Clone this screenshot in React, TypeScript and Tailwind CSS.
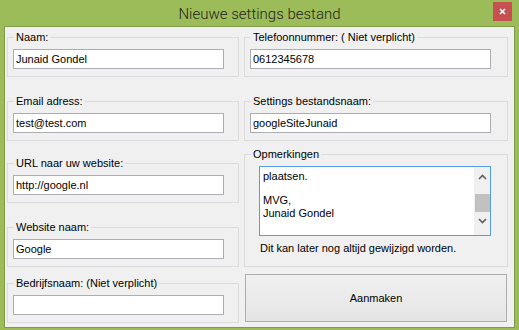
import React from "react";

const font = { fontFamily: '"Liberation Sans", Arial, sans-serif' };

function Group({
  label,
  className,
  children,
}: {
  label: string;
  className: string;
  children?: React.ReactNode;
}) {
  return (
    <div className={`relative border border-[#dcdcdc] ${className}`}>
      <span className="absolute left-[6px] top-[-8px] bg-[#f0f0f0] px-[2px] text-[11px] leading-[14px] text-black">
        {label}
      </span>
      {children}
    </div>
  );
}

function Input({ value, className }: { value: string; className: string }) {
  return (
    <div
      className={`flex h-[20px] items-center border border-[#abadb3] bg-white pl-[2px] text-[11px] text-black ${className}`}
    >
      {value}
    </div>
  );
}

export default function App() {
  return (
    <div className="flex h-[330px] w-[519px] flex-col bg-[#9cbc59]" style={font}>
      <div className="relative flex h-[26px] items-center justify-center">
        <span
          className="pt-[1px] text-[15px] font-light leading-[20px] text-[#1f241b]"
          style={{ fontFamily: 'Roboto, "Noto Sans", sans-serif' }}
        >
          Nieuwe settings bestand
        </span>
        <div className="absolute right-[7px] top-[2px] flex h-[19px] w-[19px] items-center justify-center bg-[#c75050]">
          <svg width="7" height="7" viewBox="0 0 7 7">
            <path d="M1 1 L6 6 M6 1 L1 6" stroke="#ffffff" strokeWidth="1.6" />
          </svg>
        </div>
      </div>
      <div className="mx-[4px] flex h-[302px] gap-[5px] border border-[#7f9a48] bg-[#f0f0f0] pl-[2px]">
        {/* left column */}
        <div className="flex w-[232px] flex-col pt-[10px]">
          <Group label="Naam:" className="h-[40px] pl-[5px] pt-[11px]">
            <Input value="Junaid Gondel" className="w-[211px]" />
          </Group>
          <Group label="Email adress:" className="mt-[24px] h-[40px] pl-[5px] pt-[11px]">
            <Input value="test@test.com" className="w-[211px]" />
          </Group>
          <Group label="URL naar uw website:" className="mt-[22px] h-[40px] pl-[5px] pt-[11px]">
            <Input value="http://google.nl" className="w-[211px]" />
          </Group>
          <Group label="Website naam:" className="mt-[24px] h-[40px] pl-[5px] pt-[11px]">
            <Input value="Google" className="w-[211px]" />
          </Group>
          <Group label="Bedrijfsnaam: (Niet verplicht)" className="mt-[16px] h-[40px] pl-[5px] pt-[11px]">
            <Input value="" className="w-[211px]" />
          </Group>
        </div>
        {/* right column */}
        <div className="flex w-[264px] flex-col pt-[10px]">
          <Group label="Telefoonnummer: ( Niet verplicht)" className="h-[40px] pl-[5px] pt-[11px]">
            <Input value="0612345678" className="w-[241px]" />
          </Group>
          <Group label="Settings bestandsnaam:" className="mt-[24px] h-[40px] pl-[5px] pt-[11px]">
            <Input value="googleSiteJunaid" className="w-[241px]" />
          </Group>
          <Group label="Opmerkingen" className="mt-[13px] h-[113px] pl-[14px] pt-[11px]">
            <div className="flex h-[70px] w-[232px] border border-[#569de5] bg-white">
              <div className="flex-1 pl-[3px] pt-[3px] text-[11px] leading-[13px] text-black">
                <div>plaatsen.</div>
                <div className="h-[13px]" />
                <div className="mt-[-2px]">MVG,</div>
                <div>Junaid Gondel</div>
              </div>
              <div className="flex w-[16px] flex-col items-center bg-[#f0f0f0]">
                <svg className="mt-[7px]" width="9" height="6" viewBox="0 0 9 6">
                  <path d="M1 5 L4.5 1.5 L8 5" stroke="#606060" strokeWidth="1.6" fill="none" />
                </svg>
                <div className="mt-[14px] h-[18px] w-[15px] bg-[#c1c1c1]" />
                <svg className="mt-[6px]" width="9" height="6" viewBox="0 0 9 6">
                  <path d="M1 1 L4.5 4.5 L8 1" stroke="#606060" strokeWidth="1.6" fill="none" />
                </svg>
              </div>
            </div>
            <div className="mt-[6px] pl-[1px] text-[11px] leading-[13px] text-black">
              Dit kan later nog altijd gewijzigd worden.
            </div>
          </Group>
          <button className="ml-[1px] mt-[7px] flex h-[48px] w-[262px] items-center justify-center border border-[#adadad] bg-gradient-to-b from-[#f0f0f0] to-[#e5e5e5] text-[11px] text-black">
            Aanmaken
          </button>
        </div>
      </div>
    </div>
  );
}
